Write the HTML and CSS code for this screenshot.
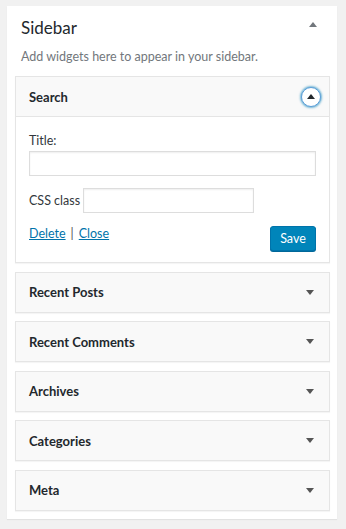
FILE: index.html
```html
<!DOCTYPE html>
<html>
<head>
<meta charset="utf-8">
<link rel="stylesheet" href="styles.css">
</head>
<body>
<div class="sidebar">
  <div class="sidebar-head">
    <h2 class="sidebar-title">Sidebar</h2>
    <span class="arrow arrow-up-gray"></span>
  </div>
  <p class="sidebar-desc">Add widgets here to appear in your sidebar.</p>
  <div class="widgets">
    <div class="widget open">
      <div class="widget-top">
        <span class="widget-title">Search</span>
        <span class="toggle"><span class="arrow arrow-up-dark"></span></span>
      </div>
      <div class="widget-inside">
        <label class="field-label">Title:</label>
        <input class="input input-full" type="text">
        <div class="css-row">
          <label class="field-label inline">CSS class</label>
          <input class="input input-css" type="text">
        </div>
        <div class="actions">
          <div class="links"><a href="#">Delete</a><span class="sep">|</span><a href="#">Close</a></div>
          <button class="save">Save</button>
        </div>
      </div>
    </div>
    <div class="widget">
      <div class="widget-top"><span class="widget-title">Recent Posts</span><span class="arrow arrow-down"></span></div>
    </div>
    <div class="widget">
      <div class="widget-top"><span class="widget-title">Recent Comments</span><span class="arrow arrow-down"></span></div>
    </div>
    <div class="widget">
      <div class="widget-top"><span class="widget-title">Archives</span><span class="arrow arrow-down"></span></div>
    </div>
    <div class="widget">
      <div class="widget-top"><span class="widget-title">Categories</span><span class="arrow arrow-down"></span></div>
    </div>
    <div class="widget">
      <div class="widget-top"><span class="widget-title">Meta</span><span class="arrow arrow-down"></span></div>
    </div>
  </div>
</div>
</body>
</html>
```

FILE: styles.css
```css
html, body {
  margin: 0;
  padding: 0;
  background: #f1f1f1;
}
body {
  padding: 6px 9px 9px 7px;
  font-family: "Lato", "Open Sans", sans-serif;
  color: #23282d;
}
.sidebar {
  width: 330px;
  background: #fff;
  box-shadow: 0 1px 1px rgba(0,0,0,0.06);
  padding: 0 0 8px 0;
  box-sizing: border-box;
}
.sidebar-head {
  display: flex;
  justify-content: space-between;
  align-items: center;
  padding: 8px 20px 0 14px;
  height: 26px;
}
.sidebar-title {
  margin: 0;
  font-size: 17px;
  font-weight: 400;
  color: #23282d;
}
.sidebar-head .arrow {
  align-self: flex-start;
  margin-top: 8px;
}
.sidebar-desc {
  margin: 9px 0 0 14px;
  font-size: 12.5px;
  color: #72777c;
  height: 21px;
}
.widgets {
  padding: 6px 7px 0 8px;
}
.widget {
  border: 1px solid #e5e5e5;
  background: #f9f9f9;
  box-shadow: 0 1px 1px rgba(0,0,0,0.04);
  margin-bottom: 8.5px;
}
.widget:last-child {
  margin-bottom: 0;
}
.widget-top {
  height: 39px;
  display: flex;
  align-items: center;
  justify-content: space-between;
  padding: 0 15px 0 13px;
}
.widget-title {
  font-size: 13px;
  font-weight: 700;
  color: #23282d;
}
.arrow {
  display: inline-block;
  width: 0;
  height: 0;
  border-left: 4px solid transparent;
  border-right: 4px solid transparent;
}
.arrow-down {
  border-top: 5px solid #555;
}
.arrow-up-gray {
  border-bottom: 5px solid #72777c;
}
.arrow-up-dark {
  border-bottom: 5px solid #23282d;
}
.open .widget-top {
  padding-right: 8px;
}
.toggle {
  width: 18px;
  height: 18px;
  border-radius: 50%;
  border: 1px solid #5b9dd9;
  box-shadow: 0 0 2px 1px rgba(30,140,190,0.6);
  display: flex;
  align-items: center;
  justify-content: center;
  background: #fff;
}
.toggle .arrow {
  margin-top: -1px;
}
.widget-inside {
  background: #fff;
  border-top: 1px solid #e5e5e5;
  padding: 16px 13px 11px 13px;
}
.field-label {
  display: block;
  font-size: 12.5px;
  color: #32373c;
  margin-bottom: 3px;
}
.field-label.inline {
  display: inline-block;
  margin: 0 3px 0 0;
}
.input {
  box-sizing: border-box;
  height: 25px;
  border: 1px solid #ddd;
  box-shadow: inset 0 1px 2px rgba(0,0,0,0.07);
  background: #fff;
  margin: 0;
  padding: 0;
}
.input-full {
  width: 287px;
  display: block;
}
.css-row {
  display: flex;
  align-items: center;
  margin-top: 12px;
}
.input-css {
  width: 171px;
}
.actions {
  display: flex;
  justify-content: space-between;
  align-items: flex-start;
  margin-top: 13px;
}
.links {
  font-size: 12.5px;
  color: #555;
}
.links a {
  color: #0073aa;
  text-decoration: underline;
}
.sep {
  color: #555;
  margin: 0 5px;
}
.save {
  font-family: inherit;
  font-size: 12.5px;
  color: #fff;
  background: #0085ba;
  border: 1px solid #0073aa;
  border-radius: 3px;
  box-shadow: 0 1px 0 #006799;
  height: 25px;
  width: 46px;
  padding: 0;
}
```
